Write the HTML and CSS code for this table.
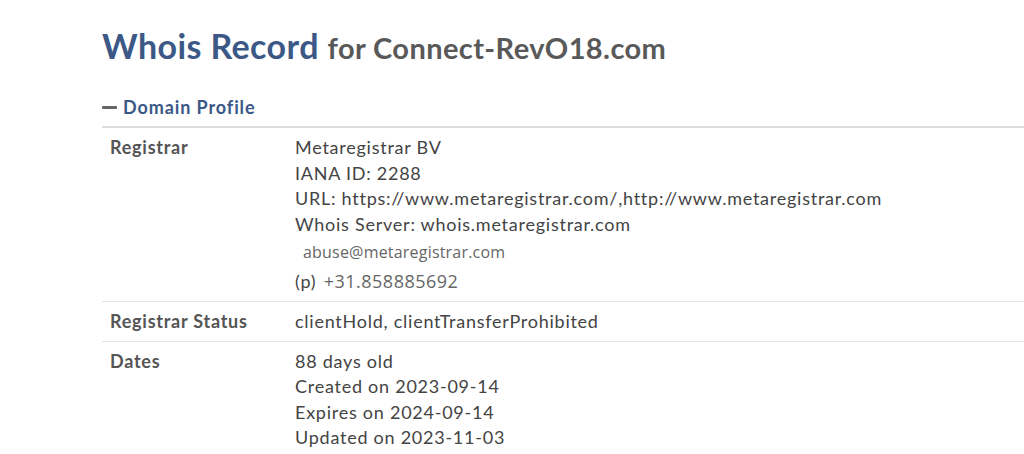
FILE: index.html
```html
<!DOCTYPE html>
<html lang="en">
  <head>
    <meta charset="UTF-8" />
    <meta name="viewport" content="width=device-width, initial-scale=1.0" />
    <title>Whois Record for Connect-RevO18.com</title>
    <link rel="stylesheet" href="styles.css">
  </head>
  <body>
    <div class="page">
      <h1 class="title">Whois Record <span class="domain">for Connect-RevO18.com</span></h1>

      <div class="section">
        <div class="sectionHead">
          <span class="dash"></span>
          <span>Domain Profile</span>
        </div>

        <div class="row">
          <div class="label">Registrar</div>
          <div class="value">
            <div>Metaregistrar BV</div>
            <div>IANA ID: 2288</div>
            <div>URL: https://www.metaregistrar.com/,http://www.metaregistrar.com</div>
            <div>Whois Server: whois.metaregistrar.com</div>
            <div class="contact email">abuse@metaregistrar.com</div>
            <div class="phoneLine">(p) <span class="contact">+31.858885692</span></div>
          </div>
        </div>

        <div class="row">
          <div class="label">Registrar Status</div>
          <div class="value">clientHold, clientTransferProhibited</div>
        </div>

        <div class="row">
          <div class="label">Dates</div>
          <div class="value">
            <div>88 days old</div>
            <div>Created on 2023-09-14</div>
            <div>Expires on 2024-09-14</div>
            <div>Updated on 2023-11-03</div>
          </div>
        </div>
      </div>
    </div>
  </body>
</html>
```

FILE: styles.css
```css
body {
  margin: 0;
  background: #fff;
  font-family: Lato, "Liberation Sans", sans-serif;
  color: #444;
  overflow: hidden;
}

.page {
  padding: 24px 0 0 102px;
}

.title {
  margin: 0;
  font-size: 34px;
  font-weight: 700;
  color: #3b5886;
  line-height: 44px;
  letter-spacing: 0.4px;
}
.domain {
  font-size: 29px;
  color: #595959;
}

.section {
  margin-top: 26px;
}
.sectionHead {
  display: flex;
  align-items: center;
  gap: 6px;
  font-size: 18px;
  font-weight: 700;
  color: #3b5886;
  padding-bottom: 8px;
  border-bottom: 2px solid #ddd;
  letter-spacing: 0.9px;
}
.dash {
  width: 15px;
  height: 3px;
  border-radius: 1px;
  background: #666;
}

.row {
  display: flex;
  padding: 7px 0 6px 0;
  border-bottom: 1px solid #e4e4e4;
  font-size: 18px;
  line-height: 25.5px;
  letter-spacing: 0.75px;
}
.row:last-child {
  border-bottom: none;
}
.label {
  width: 193px;
  box-sizing: border-box;
  padding-left: 8px;
  font-weight: 700;
  color: #555;
}
.value {
  color: #444;
}

.contact {
  font-family: "Open Sans", "Liberation Sans", sans-serif;
  font-size: 16px;
  color: #666;
  letter-spacing: 0.2px;
}
.email {
  padding-left: 8px;
  line-height: 31px;
}
.phoneLine {
  line-height: 27px;
}
.phoneLine .contact {
  font-size: 18px;
  letter-spacing: 0.5px;
  margin-left: 2px;
}
```
